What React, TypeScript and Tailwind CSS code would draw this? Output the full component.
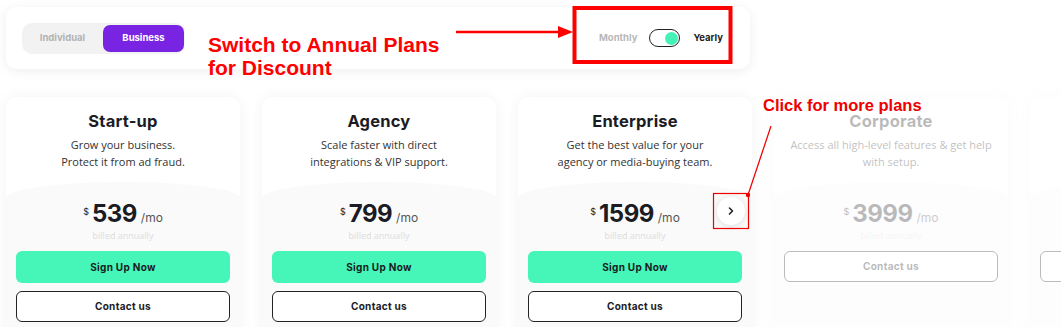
import React from "react";

const HEAD = "font-['Inter','Liberation_Sans',sans-serif]";
const BODY = "font-['Open_Sans','Liberation_Sans',sans-serif]";

type Plan = {
  title: string;
  desc: string[];
  price: string;
  signup: boolean;
  faded?: boolean;
};

const plans: Plan[] = [
  { title: "Start-up", desc: ["Grow your business.", "Protect it from ad fraud."], price: "539", signup: true },
  { title: "Agency", desc: ["Scale faster with direct", "integrations & VIP support."], price: "799", signup: true },
  { title: "Enterprise", desc: ["Get the best value for your", "agency or media-buying team."], price: "1599", signup: true },
  { title: "Corporate", desc: ["Access all high-level features & get help", "with setup."], price: "3999", signup: false, faded: true },
  { title: "Custom", desc: ["Let's build a plan tailored to your", "exact needs."], price: "", signup: false, faded: true },
];

function Card({ p }: { p: Plan }) {
  return (
    <div
      className={`w-[234px] h-[250px] shrink-0 flex flex-col rounded-[10px] bg-white overflow-hidden shadow-[0_0_14px_rgba(0,0,0,0.05)] ${
        p.faded ? "opacity-30" : ""
      }`}
    >
      <div className="flex flex-col items-center pt-[13px]">
        <div className={`${HEAD} text-[16.5px] leading-[22px] font-bold text-[#1b1b24] tracking-[0.2px]`}>{p.title}</div>
        <div className={`${BODY} mt-[4px] text-[11px] leading-[17px] text-[#333] text-center whitespace-nowrap`}>
          {p.desc.map((d) => (
            <div key={d}>{d}</div>
          ))}
        </div>
      </div>
      <div className="mt-[12px] flex-1 bg-[#fafafa] rounded-t-[50%_16px] flex flex-col items-center px-[10px]">
        <div className="h-[61px] flex flex-col items-center justify-end">
          {p.price && (
            <div className="flex items-baseline">
              <span className={`${HEAD} text-[9px] text-[#222] mr-[3px] relative -top-[7px]`}>$</span>
              <span className={`${HEAD} text-[24px] leading-[28px] font-bold text-[#1b1b24] tracking-[-0.5px]`}>{p.price}</span>
              <span className={`${HEAD} text-[12px] text-[#555] ml-[4px]`}>/mo</span>
            </div>
          )}
          <div className={`${BODY} text-[9px] leading-[14px] text-[#dcdcdc] mt-[1px]`}>billed annually</div>
        </div>
        <div className="mt-[8px] w-full flex flex-col gap-[8px]">
          {p.signup && (
            <div
              className={`${HEAD} h-[32px] w-full rounded-[6px] bg-[#45f6b8] flex items-center justify-center text-[10px] font-bold text-[#1b1b24] tracking-[0.3px]`}
            >
              Sign Up Now
            </div>
          )}
          <div
            className={`${HEAD} h-[31px] w-full rounded-[6px] border-[1.5px] border-[#222] bg-white flex items-center justify-center text-[10px] font-bold text-[#1b1b24] tracking-[0.3px]`}
          >
            Contact us
          </div>
        </div>
      </div>
    </div>
  );
}

export default function App() {
  return (
    <div className="relative w-[1061px] h-[327px] overflow-hidden bg-white">
      <div className="pl-[6px] pt-[7px]">
        <div className="w-[744px] h-[62px] rounded-[10px] bg-white shadow-[0_2px_12px_rgba(0,0,0,0.07)] flex items-center justify-between pl-[16px] pr-[27px]">
          <div className="flex items-center h-[31px] w-[163px] rounded-[10px] bg-[#f2f2f2] pr-[1px]">
            <div className={`${HEAD} flex-1 text-center text-[9.5px] font-bold text-[#b3b3b3]`}>Individual</div>
            <div
              className={`${HEAD} w-[81px] h-[27px] rounded-[7px] bg-[#7a24e3] flex items-center justify-center text-[9.5px] font-bold text-white`}
            >
              Business
            </div>
          </div>
          <div className="flex items-center">
            <span className={`${HEAD} text-[9.5px] font-bold text-[#b8b8b8]`}>Monthly</span>
            <div className="ml-[12px] w-[31px] h-[18px] rounded-full border-[1.5px] border-[#222] flex items-center justify-end pr-[1.5px]">
              <div className="w-[13px] h-[13px] rounded-full bg-[#45f2b5]" />
            </div>
            <span className={`${HEAD} ml-[13px] text-[9.5px] font-bold text-[#1b1b24]`}>Yearly</span>
          </div>
        </div>
      </div>

      <div className="flex gap-[22px] pl-[6px] mt-[28px]">
        {plans.map((p) => (
          <Card key={p.title} p={p} />
        ))}
      </div>

      {/* chevron button */}
      <div className="absolute left-[717px] top-[197px] w-[28px] h-[28px] rounded-full bg-white shadow-[0_1px_6px_rgba(0,0,0,0.12)] flex items-center justify-center">
        <svg width="10" height="10" viewBox="0 0 10 10">
          <path d="M3.5 2 L6.5 5 L3.5 8" stroke="#222" strokeWidth="1.6" fill="none" strokeLinecap="round" strokeLinejoin="round" />
        </svg>
      </div>

      {/* annotations */}
      <svg className="absolute left-0 top-0 pointer-events-none" width="1061" height="327">
        <rect x="574.5" y="8" width="156" height="54" fill="none" stroke="#f00" strokeWidth="4" />
        <line x1="456" y1="32" x2="560" y2="32" stroke="#f00" strokeWidth="2.5" />
        <polygon points="558,26 573,32 558,38" fill="#f00" />
        <rect x="713.5" y="193.5" width="35" height="35" fill="none" stroke="#e00" strokeWidth="1.2" />
        <line x1="771" y1="126" x2="748" y2="195" stroke="#e00" strokeWidth="1.2" />
        <circle cx="748" cy="195" r="2.2" fill="#e00" />
      </svg>
      <div className="absolute left-[208px] top-[33px] font-['Liberation_Sans',Arial,sans-serif] font-bold text-[21px] leading-[23px] text-[#f00]">
        <div>Switch to Annual Plans</div>
        <div>for Discount</div>
      </div>
      <div className="absolute left-[763px] top-[95px] font-['Liberation_Sans',Arial,sans-serif] font-bold text-[16.5px] leading-[20px] text-[#e00]">
        Click for more plans
      </div>
    </div>
  );
}
